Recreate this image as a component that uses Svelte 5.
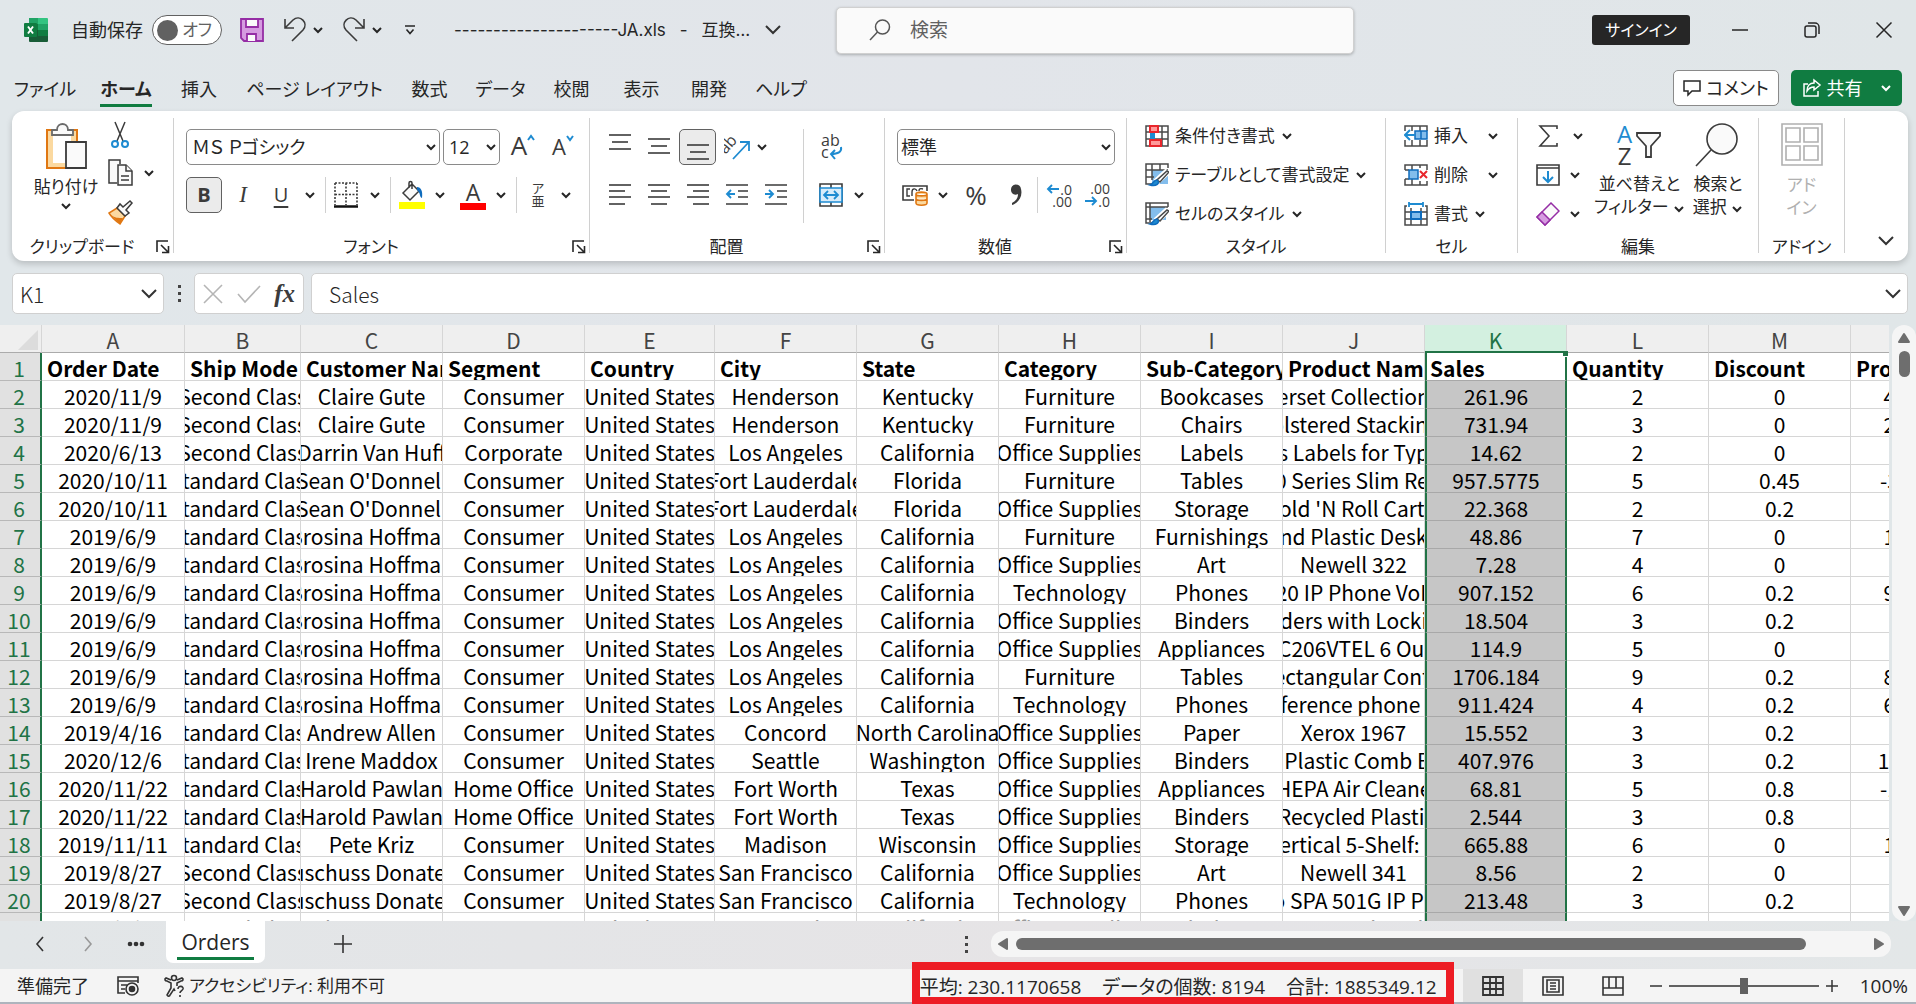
<script>
  let fontName = 'ＭＳ Ｐゴシック'
  let fontSize = '12'
  let numberFormat = '標準'
  let autoSave = false
  let zoom = 50

  const tabs = ['ファイル', 'ホーム', '挿入', 'ページ レイアウト', '数式', 'データ', '校閲', '表示', '開発', 'ヘルプ']
  const letters = 'ABCDEFGHIJKLMN'.split('')
  const widths = [143, 116, 142, 142, 130, 142, 142, 142, 142, 142, 142, 142, 142, 142]
  const headers = ['Order Date', 'Ship Mode', 'Customer Name', 'Segment', 'Country', 'City', 'State', 'Category', 'Sub-Category', 'Product Name', 'Sales', 'Quantity', 'Discount', 'Profit']

  const US = 'United States'
  const OS = 'Office Supplies'
  const LA = 'Los Angeles'
  const CA = 'California'
  const BH = 'Brosina Hoffman'
  const rows = [
    ['2020/11/9', 'Second Class', 'Claire Gute', 'Consumer', US, 'Henderson', 'Kentucky', 'Furniture', 'Bookcases', 'Bush Somerset Collection Bookcase', '261.96', '2', '0', '41.9136'],
    ['2020/11/9', 'Second Class', 'Claire Gute', 'Consumer', US, 'Henderson', 'Kentucky', 'Furniture', 'Chairs', 'Hon Deluxe Fabric Upholstered Stacking Chairs, Rounded Back', '731.94', '3', '0', '219.582'],
    ['2020/6/13', 'Second Class', 'Darrin Van Huff', 'Corporate', US, LA, CA, OS, 'Labels', 'Self-Adhesive Address Labels for Typewriters by Universal', '14.62', '2', '0', '6.8714'],
    ['2020/10/11', 'Standard Class', "Sean O'Donnell", 'Consumer', US, 'Fort Lauderdale', 'Florida', 'Furniture', 'Tables', 'Bretford CR4500 Series Slim Rectangular Table', '957.5775', '5', '0.45', '-383.031'],
    ['2020/10/11', 'Standard Class', "Sean O'Donnell", 'Consumer', US, 'Fort Lauderdale', 'Florida', OS, 'Storage', "Eldon Fold 'N Roll Cart System", '22.368', '2', '0.2', '2.5164'],
    ['2019/6/9', 'Standard Class', BH, 'Consumer', US, LA, CA, 'Furniture', 'Furnishings', 'Eldon Expressions Wood and Plastic Desk Accessories, Cherry Wood', '48.86', '7', '0', '14.1694'],
    ['2019/6/9', 'Standard Class', BH, 'Consumer', US, LA, CA, OS, 'Art', 'Newell 322', '7.28', '4', '0', '1.9656'],
    ['2019/6/9', 'Standard Class', BH, 'Consumer', US, LA, CA, 'Technology', 'Phones', 'Mitel 5320 IP Phone VoIP phone', '907.152', '6', '0.2', '90.7152'],
    ['2019/6/9', 'Standard Class', BH, 'Consumer', US, LA, CA, OS, 'Binders', 'DXL Angle-View Binders with Locking Rings by Samsill', '18.504', '3', '0.2', '5.7825'],
    ['2019/6/9', 'Standard Class', BH, 'Consumer', US, LA, CA, OS, 'Appliances', 'Belkin F5C206VTEL 6 Outlet Surge', '114.9', '5', '0', '34.47'],
    ['2019/6/9', 'Standard Class', BH, 'Consumer', US, LA, CA, 'Furniture', 'Tables', 'Chromcraft Rectangular Conference Tables', '1706.184', '9', '0.2', '85.3092'],
    ['2019/6/9', 'Standard Class', BH, 'Consumer', US, LA, CA, 'Technology', 'Phones', 'Konftel 250 Conference phone - Charcoal black', '911.424', '4', '0.2', '68.3568'],
    ['2019/4/16', 'Standard Class', 'Andrew Allen', 'Consumer', US, 'Concord', 'North Carolina', OS, 'Paper', 'Xerox 1967', '15.552', '3', '0.2', '5.4432'],
    ['2020/12/6', 'Standard Class', 'Irene Maddox', 'Consumer', US, 'Seattle', 'Washington', OS, 'Binders', 'Fellowes PB200 Plastic Comb Binding Machine', '407.976', '3', '0.2', '132.5922'],
    ['2020/11/22', 'Standard Class', 'Harold Pawlan', 'Home Office', US, 'Fort Worth', 'Texas', OS, 'Appliances', 'Holmes Replacement Filter for HEPA Air Cleaner, Very Large Room, HEPA Filter', '68.81', '5', '0.8', '-123.858'],
    ['2020/11/22', 'Standard Class', 'Harold Pawlan', 'Home Office', US, 'Fort Worth', 'Texas', OS, 'Binders', 'Storex DuraTech Recycled Plastic Frosted Binders', '2.544', '3', '0.8', '-3.816'],
    ['2019/11/11', 'Standard Class', 'Pete Kriz', 'Consumer', US, 'Madison', 'Wisconsin', OS, 'Storage', 'Stur-D-Stor Shelving, Vertical 5-Shelf: 72"H x 36"W x 18 1/2"D', '665.88', '6', '0', '13.3176'],
    ['2019/8/27', 'Second Class', 'Zuschuss Donatelli', 'Consumer', US, 'San Francisco', CA, OS, 'Art', 'Newell 341', '8.56', '2', '0', '2.4824'],
    ['2019/8/27', 'Second Class', 'Zuschuss Donatelli', 'Consumer', US, 'San Francisco', CA, 'Technology', 'Phones', 'Cisco SPA 501G IP Phone', '213.48', '3', '0.2', '16.011'],
    ['2019/8/27', 'Second Class', 'Zuschuss Donatelli', 'Consumer', US, 'San Francisco', CA, OS, 'Binders', 'Wilson Jones Hanging View Binder', '22.72', '4', '0.2', '7.384']
  ]
</script>

{#snippet chev()}
  <svg class="chev" width="12" height="8" viewBox="0 0 12 8"><path d="M2 2l4 4 4-4" /></svg>
{/snippet}

{#snippet bigChev()}
  <svg class="chev big" width="18" height="12" viewBox="0 0 18 12"><path d="M2 2l7 7 7-7" /></svg>
{/snippet}

{#snippet launcher(name)}
  <button class="launcher" aria-label={name}>
    <svg width="14" height="14" viewBox="0 0 14 14" fill="none" stroke="#262626" stroke-width="1.6"><path d="M1 12V1h11M5 5l7 7M12.5 6v6.5H6" /></svg>
  </button>
{/snippet}

{#snippet lines(list)}
  <svg width="26" height="26" viewBox="0 0 26 26" stroke="#3b3b3b" stroke-width="1.6">
    {#each list as [x1, x2, y]}
      <path d="M{x1} {y}H{x2}" />
    {/each}
  </svg>
{/snippet}

<div class="app">
  <header class="titlebar">
    <svg class="logo" width="24" height="24" viewBox="0 0 24 24">
      <path fill="#21a366" d="M5 0h10v6H5z" /><path fill="#33c481" d="M14 0h9a1 1 0 011 1v5H14z" />
      <path fill="#185c37" d="M5 12h9v6h10v5a1 1 0 01-1 1H6a1 1 0 01-1-1z" /><path fill="#107c41" d="M5 6h9v6H5zM14 12h10v6H14z" /><path fill="#21a366" d="M14 6h10v6H14z" />
      <rect y="5" width="13" height="14" rx="1" fill="#107c41" />
      <path d="M4 8.500l5 7M9 8.500l-5 7" stroke="#fff" stroke-width="1.900" />
    </svg>
    <label class="autosave">
      <span>自動保存</span>
      <span class="switch">
        <input type="checkbox" role="switch" bind:checked={autoSave} />
        <span class="knob"></span>
        <span class="off">オフ</span>
      </span>
    </label>
    <div class="quick">
      <button aria-label="上書き保存">
        <svg width="26" height="26" viewBox="0 0 26 26" fill="#d59be0" stroke="#952da5" stroke-width="1.800"><path d="M2 2h22v22H5l-3-3z" /><path fill="#fafafa" d="M7 2h12v8H7zM8 24v-7h9v7" /></svg>
      </button>
      <button aria-label="元に戻す">
        <svg width="26" height="28" viewBox="0 0 26 28" fill="none" stroke="#3b3b3b" stroke-width="1.600"><path d="M3 3v9h9M3 12l8-8c7-6 16 3 10 10L10 25" /></svg>
        {@render chev()}
      </button>
      <button aria-label="やり直し">
        <svg width="26" height="28" viewBox="0 0 26 28" fill="none" stroke="#3b3b3b" stroke-width="1.600"><path d="M23 3v9h-9M23 12l-8-8C8-2-1 7 5 14l11 11" /></svg>
        {@render chev()}
      </button>
      <button aria-label="クイック アクセスのカスタマイズ">
        <svg width="12" height="12" viewBox="0 0 12 12" fill="none" stroke="#262626" stroke-width="1.600"><path d="M1 2h10M2.500 5.500L6 9.500l3.500-4" /></svg>
      </button>
    </div>
    <button class="filename"><span>---------------------JA.xls</span><span>-</span><span>互換…</span>{@render bigChev()}</button>
    <label class="search">
      <svg width="24" height="24" viewBox="0 0 24 24" fill="none" stroke="#555" stroke-width="1.500"><circle cx="14.500" cy="9" r="7" /><path d="M9.500 14L2 22" /></svg>
      <input type="search" placeholder="検索" aria-label="検索" />
    </label>
    <div class="window">
      <button class="signin">サインイン</button>
      <button aria-label="最小化"><svg width="18" height="18" viewBox="0 0 18 18" stroke="#262626" stroke-width="1.500"><path d="M1 9h16" /></svg></button>
      <button aria-label="元に戻す (縮小)"><svg width="18" height="18" viewBox="0 0 18 18" fill="none" stroke="#262626" stroke-width="1.500"><rect x="2" y="5" width="11" height="11" rx="2" /><path d="M5 2h7a4 4 0 014 4v7" /></svg></button>
      <button aria-label="閉じる"><svg width="18" height="18" viewBox="0 0 18 18" stroke="#262626" stroke-width="1.500"><path d="M1.500 1.500l15 15M16.500 1.500l-15 15" /></svg></button>
    </div>
  </header>

  <div class="tabbar">
    <nav>
      {#each tabs as tab}
        <button class:active={tab === 'ホーム'}><span>{tab}</span></button>
      {/each}
    </nav>
    <button class="comment">
      <svg width="18" height="18" viewBox="0 0 18 18" fill="none" stroke="#262626" stroke-width="1.500"><path d="M1 2h16v10H9l-4 4v-4H1z" /></svg>コメント
    </button>
    <button class="share">
      <svg width="20" height="20" viewBox="0 0 20 20" fill="none" stroke="#fff" stroke-width="1.500"><path d="M6 6H2v12h14v-5" /><path d="M12 2l6 5-6 5V9c-3 0-5 1-7 4 0-5 3-8 7-8z" /></svg>共有{@render chev()}
    </button>
  </div>

  <section class="ribbon">
    <div class="group">
      <div class="clip">
        <button class="tall">
          <svg width="42" height="46" viewBox="0 0 42 46" stroke-width="1.800">
            <path fill="#fff" stroke="#e07712" d="M2 7h30v38H2z" stroke-width="2" />
            <path fill="#fbd9a0" d="M3 8h5v32h12v4H3zM26 8h5v11h-5z" />
            <path fill="#fafafa" stroke="#6b6b6b" d="M7 12V7h5c0-8 11-8 11 0h5v5z" />
            <path fill="#fafafa" stroke="#3b3b3b" d="M21 19h20v26H21z" />
          </svg>
          <span>貼り付け</span>
          {@render chev()}
        </button>
        <div class="col">
          <button class="cut" aria-label="切り取り"><svg width="24" height="28" viewBox="0 0 24 28" fill="none" stroke="#3b3b3b" stroke-width="1.500"><path d="M7 1l8 19M17 1L9 20" /><g stroke="#1e8bd1" stroke-width="2"><circle cx="7" cy="23" r="3" /><circle cx="17" cy="23" r="3" /></g></svg></button>
          <button aria-label="コピー"><svg width="26" height="28" viewBox="0 0 26 28" fill="#fafafa" stroke="#3b3b3b" stroke-width="1.500"><path d="M9 24H1V1h11v4" /><path d="M10 6h8l6 6v14H10z" /><path d="M18 6v6h6M13 17h8M13 21h8" /></svg>{@render chev()}</button>
          <button aria-label="書式のコピー"><svg width="26" height="26" viewBox="0 0 26 26" stroke-width="1.500"><path fill="#fbd9a0" stroke="#e07712" d="M9 9l8 8-5 8C8 22 4 19 1 14z" /><path fill="#e07712" d="M3 16c4 3 7 3 12 3l-3 6z" /><path fill="#fafafa" stroke="#3b3b3b" d="M9 9l3-4 3 3 7-6 2 2-6 7 3 3-4 3z" /></svg></button>
        </div>
      </div>
      <div class="caption"><span>クリップボード</span>{@render launcher('クリップボードの設定')}</div>
    </div>

    <div class="group">
      <div class="row">
        <span class="select wide"><select aria-label="フォント" bind:value={fontName}><option>ＭＳ Ｐゴシック</option></select>{@render chev()}</span>
        <span class="select narrow"><select aria-label="フォント サイズ" bind:value={fontSize}><option>12</option></select>{@render chev()}</span>
        <button class="grow" aria-label="フォント サイズの拡大"><span>A</span><svg width="8" height="22" viewBox="0 0 8 22" fill="none" stroke="#1e8bd1" stroke-width="2"><path d="M1 11l3-4 3 4" /></svg></button>
        <button class="grow small" aria-label="フォント サイズの縮小"><span>A</span><svg width="8" height="22" viewBox="0 0 8 22" fill="none" stroke="#1e8bd1" stroke-width="2"><path d="M1 7l3 4 3-4" /></svg></button>
      </div>
      <div class="row font-tools">
        <button class="on bold">B</button>
        <button class="italic">I</button>
        <button class="under">U</button>
        <button aria-label="下線の種類">{@render chev()}</button>
        <i class="sep"></i>
        <button aria-label="罫線"><svg width="24" height="26" viewBox="0 0 24 26" fill="none" stroke="#3b3b3b" stroke-width="1.600"><path stroke-dasharray="2 1.500" d="M1 1h22M1 12.500h22M1 1v22M12 1v22M23 1v22" /><path stroke="#111" stroke-width="2.500" d="M0 24.500h24" /></svg></button>
        <button aria-label="罫線の種類">{@render chev()}</button>
        <i class="sep"></i>
        <button aria-label="塗りつぶしの色"><svg width="26" height="30" viewBox="0 0 26 30"><path fill="#fafafa" stroke="#3b3b3b" stroke-width="1.500" d="M4 13l9-9 7 7-9 9zM10 8V3c0-2 3-2 3 0v6" /><path fill="#0f6cbd" d="M18 7c4 0 6 4 5 11-3-1-1-5-5-8z" /><path fill="#ff0" d="M0 22h26v7H0z" /></svg></button>
        <button aria-label="塗りつぶしの色を選択">{@render chev()}</button>
        <button class="color">A<svg width="26" height="7" viewBox="0 0 26 7"><path fill="#f00" d="M0 0h26v7H0z" /></svg></button>
        <button aria-label="フォントの色を選択">{@render chev()}</button>
        <i class="sep"></i>
        <button class="ruby"><span>ア</span><span>亜</span></button>
        <button aria-label="ふりがなの設定">{@render chev()}</button>
      </div>
      <div class="caption"><span>フォント</span>{@render launcher('フォントの設定')}</div>
    </div>

    <div class="group">
      <div class="align">
        <div class="align-grid">
          <button aria-label="上揃え">{@render lines([[2, 24, 1], [5, 21, 8], [2, 24, 15]])}</button>
          <button aria-label="上下中央揃え">{@render lines([[2, 24, 5], [5, 21, 12], [2, 24, 19]])}</button>
          <button class="on" aria-label="下揃え">{@render lines([[2, 24, 11], [5, 21, 18], [2, 24, 25]])}</button>
          <button aria-label="方向"><svg width="26" height="26" viewBox="0 0 26 26"><text x="-3" y="13" transform="rotate(-48 8 12)" font-size="16" fill="#3b3b3b">ab</text><path d="M9 25L24 9M16 8h9v9" fill="none" stroke="#1e8bd1" stroke-width="1.800" /></svg></button>
          <button class="left" aria-label="方向の種類">{@render chev()}</button>
          <button aria-label="左揃え">{@render lines([[2, 24, 3], [2, 18, 9], [2, 24, 15], [2, 18, 22]])}</button>
          <button aria-label="中央揃え">{@render lines([[2, 24, 3], [5, 21, 9], [2, 24, 15], [5, 21, 22]])}</button>
          <button aria-label="右揃え">{@render lines([[2, 24, 3], [8, 24, 9], [2, 24, 15], [8, 24, 22]])}</button>
          <button aria-label="インデントを減らす"><svg width="26" height="26" viewBox="0 0 26 26" fill="none" stroke="#3b3b3b" stroke-width="1.600"><path d="M2 3h22M14 9h10M14 15h10M2 22h22" /><path stroke="#1e8bd1" stroke-width="1.900" d="M11 12H3M7 8l-4 4 4 4" /></svg></button>
          <button aria-label="インデントを増やす"><svg width="26" height="26" viewBox="0 0 26 26" fill="none" stroke="#3b3b3b" stroke-width="1.600"><path d="M2 3h22M14 9h10M14 15h10M2 22h22" /><path stroke="#1e8bd1" stroke-width="1.900" d="M2 12h8M6 8l4 4-4 4" /></svg></button>
        </div>
        <i class="sep"></i>
        <div class="align-side">
          <button class="wrap"><span>ab</span><span>c<svg width="14" height="14" viewBox="0 0 14 14" fill="none" stroke="#1e8bd1" stroke-width="2"><path d="M12 1c1 5-3 7-10 7M6 4L2 8l4 5" /></svg></span></button>
          <span></span>
          <button aria-label="セルを結合して中央揃え"><svg width="26" height="26" viewBox="0 0 26 26" fill="none" stroke="#3b3b3b" stroke-width="1.600"><path d="M2 2h22v22H2zM13 2v5M13 19v5" /><path fill="#d9ecfa" stroke="#1e8bd1" d="M2 6h22v14H2z" /><path stroke="#1e8bd1" stroke-width="1.800" d="M6 13h14M10 9l-4 4 4 4M16 9l4 4-4 4" /></svg></button>
          <button aria-label="結合の種類">{@render chev()}</button>
        </div>
      </div>
      <div class="caption"><span>配置</span>{@render launcher('配置の設定')}</div>
    </div>

    <div class="group">
      <div class="row">
        <span class="select number"><select aria-label="数値の書式" bind:value={numberFormat}><option>標準</option></select>{@render chev()}</span>
      </div>
      <div class="row number-tools">
        <button aria-label="通貨表示形式"><svg width="26" height="24" viewBox="0 0 26 24" fill="none" stroke="#3b3b3b" stroke-width="1.600"><path d="M12 17H1V3h24v5" /><path d="M8 6H5v7h3M15 8c-1-3-5-3-5 1v4M21 6c-3-1-4 0-4 2" stroke-width="1.400" /><path fill="#fbd9a0" stroke="#e07712" d="M14 11c0-2.500 11-2.500 11 0v9c0 3-11 3-11 0zM14 11c0 2.500 11 2.500 11 0M14 15.500c0 2.500 11 2.500 11 0" /></svg></button>
        <button aria-label="通貨の種類">{@render chev()}</button>
        <button class="percent">%</button>
        <button aria-label="桁区切りスタイル"><svg width="14" height="22" viewBox="0 0 14 22"><path fill="#3b3b3b" d="M2 6a5 5 0 0110-1c2 8-3 14-9 16v-2c4-2 6-5 6-9-4 2-7-1-7-4z" /></svg></button>
        <i class="sep"></i>
        <button class="decimal" aria-label="小数点以下の表示桁数を増やす"><span><svg width="14" height="12" viewBox="0 0 14 12" fill="none" stroke="#1e8bd1" stroke-width="1.900"><path d="M13 6H2M6 2L2 6l4 4" /></svg>.0</span><span>.00</span></button>
        <button class="decimal" aria-label="小数点以下の表示桁数を減らす"><span>.00</span><span><svg width="14" height="12" viewBox="0 0 14 12" fill="none" stroke="#1e8bd1" stroke-width="1.900"><path d="M1 6h11M8 2l4 4-4 4" /></svg>.0</span></button>
      </div>
      <div class="caption"><span>数値</span>{@render launcher('数値の設定')}</div>
    </div>

    <div class="group">
      <div class="list">
        <button><svg width="24" height="22" viewBox="0 0 24 22" fill="none" stroke="#4a4a4a" stroke-width="1.500"><path d="M1 1h22v20H1zM1 7h22M1 14h22M6 1v20M17 1v20" /><path fill="#f99" stroke="#e8262c" stroke-width="2" d="M5 1h8v6H5zM5 15h11v6H5z" /><path fill="#1e8bd1" d="M5 8h5v6H5z" stroke="none" /></svg>条件付き書式{@render chev()}</button>
        <button><svg width="24" height="24" viewBox="0 0 24 24" fill="none" stroke="#4a4a4a" stroke-width="1.500"><path fill="#83bdec" stroke="none" d="M7 7h16v14H7z" /><path d="M12 21H1V1h22v4M1 7h22M1 14h8M7 1v16M15 1v6" /><path stroke="#fff" stroke-width="7" d="M23 8L11 19" /><path fill="#fff" d="M22 8l2 1-9 10-3-2z" /><path fill="#1e8bd1" stroke="#0f6cbd" d="M12 17c4 3-1 7-7 5 4-1 3-5 7-5z" /></svg>テーブルとして書式設定{@render chev()}</button>
        <button><svg width="24" height="24" viewBox="0 0 24 24" fill="none" stroke="#4a4a4a" stroke-width="1.500"><path fill="#83bdec" stroke="none" d="M5 5h16v13H5z" /><path d="M12 21H1V1h22v4M1 5h22M5 1v19M1 17h6" /><path stroke="#fff" stroke-width="7" d="M23 8L11 19" /><path fill="#fff" d="M22 8l2 1-9 10-3-2z" /><path fill="#1e8bd1" stroke="#0f6cbd" d="M12 17c4 3-1 7-7 5 4-1 3-5 7-5z" /></svg>セルのスタイル{@render chev()}</button>
      </div>
      <div class="caption"><span>スタイル</span></div>
    </div>

    <div class="group">
      <div class="list">
        <button class="spread"><svg width="24" height="22" viewBox="0 0 24 22" fill="none" stroke="#4a4a4a" stroke-width="1.500"><path d="M1 6V1h22v5M1 15v6h22v-6M8 1v5M16 1v5M8 15v6M16 15v6" /><path fill="#83bdec" stroke="#0f6cbd" d="M11 6h12v8H11zM17 6v8" /><path stroke="#1e8bd1" stroke-width="2" d="M11 10H2M6 5l-5 5 5 5" /></svg><span>挿入</span>{@render chev()}</button>
        <button class="spread"><svg width="24" height="22" viewBox="0 0 24 22" fill="none" stroke="#4a4a4a" stroke-width="1.500"><path d="M1 6V1h22v5M1 15v6h22v-4M8 1v5M16 1v3M8 15v6M16 17v4M1 6h4M1 15h4" /><path fill="#83bdec" stroke="#0f6cbd" d="M5 6h9v9H5z" /><path stroke="#e8262c" stroke-width="2" d="M16 7l7 7M23 7l-7 7" /></svg><span>削除</span>{@render chev()}</button>
        <button><svg width="24" height="24" viewBox="0 0 24 24" fill="none" stroke="#4a4a4a" stroke-width="1.500"><path d="M3 4H1v19h22V4h-2M1 10h22M1 17h22M7 6v17M17 6v17" /><path fill="#83bdec" stroke="#0f6cbd" stroke-width="2" d="M7 10h10v7H7z" /><path stroke="#1e8bd1" stroke-width="1.800" d="M5 2h14M5 0v5M19 0v5" /></svg><span>書式</span>{@render chev()}</button>
      </div>
      <div class="caption"><span>セル</span></div>
    </div>

    <div class="group">
      <div class="edit">
        <div class="col">
          <button class="sum" aria-label="オート SUM"><svg width="24" height="24" viewBox="0 0 24 24" fill="none" stroke="#3b3b3b" stroke-width="1.600"><path d="M21 5V2H4l9 10-9 10h17v-3" /></svg>{@render chev()}</button>
          <button aria-label="フィル"><svg width="24" height="22" viewBox="0 0 24 22" fill="none" stroke="#3b3b3b" stroke-width="1.600"><path d="M1 1h22v20H1zM1 4h22" /><path stroke="#1e8bd1" stroke-width="2" d="M12 7v11M7 13l5 5 5-5" /></svg>{@render chev()}</button>
          <button aria-label="クリア"><svg width="24" height="24" viewBox="0 0 24 24" fill="#fafafa" stroke="#952da5" stroke-width="1.500"><path d="M15 1l8 8L9 23l-8-8z" /><path fill="#d59be0" d="M6 10l8 8-5 5-8-8z" /></svg>{@render chev()}</button>
        </div>
        <button class="tall">
          <span class="az"><span><b>A</b>Z</span><svg width="26" height="26" viewBox="0 0 26 26" fill="#fafafa" stroke="#3b3b3b" stroke-width="1.800"><path d="M1 1h23v3l-9 10v11h-5V14L1 4z" /></svg></span>
          <span>並べ替えと<br />フィルター {@render chev()}</span>
        </button>
        <button class="tall">
          <svg width="46" height="46" viewBox="0 0 46 46" fill="#fafafa" stroke="#3b3b3b" stroke-width="1.600"><circle cx="27" cy="17" r="15" /><path d="M16 28L1 44" /></svg>
          <span>検索と<br />選択 {@render chev()}</span>
        </button>
      </div>
      <div class="caption"><span>編集</span></div>
    </div>

    <div class="group">
      <button class="tall addin" disabled>
        <svg width="42" height="46" viewBox="0 0 42 46" fill="none" stroke="#b0b0b0" stroke-width="1.600"><path d="M1 3h40v41H1zM5 7h14v14H5zM23 7h14v14H23zM5 25h14v14H5zM23 25h14v14H23z" /></svg>
        <span>アド<br />イン</span>
      </button>
      <div class="caption"><span>アドイン</span></div>
    </div>

    <div class="collapse"><button aria-label="リボンを折りたたむ">{@render bigChev()}</button></div>
  </section>

  <section class="formulabar">
    <span class="namebox"><input value="K1" aria-label="名前ボックス" />{@render bigChev()}</span>
    <span class="grip"><i></i><i></i><i></i></span>
    <span class="fx">
      <button aria-label="キャンセル"><svg width="20" height="20" viewBox="0 0 20 20" stroke="#b5b5b5" stroke-width="1.600"><path d="M1 1l18 18M19 1L1 19" /></svg></button>
      <button aria-label="入力"><svg width="24" height="20" viewBox="0 0 24 20" fill="none" stroke="#b5b5b5" stroke-width="1.600"><path d="M1 10l7 8L23 2" /></svg></button>
      <button class="fn">fx</button>
    </span>
    <span class="formula"><input value="Sales" aria-label="数式バー" />{@render bigChev()}</span>
  </section>

  <main class="sheet">
    <div class="gridwrap">
      <table>
        <colgroup>
          <col style="width: 42px" />
          {#each widths as w}<col style="width: {w}px" />{/each}
        </colgroup>
        <thead>
          <tr>
            <th class="corner"><svg width="20" height="20" viewBox="0 0 20 20"><path fill="#dcdcdc" d="M20 0v20H0z" /></svg></th>
            {#each letters as l}<th class:sel={l === 'K'}>{l}</th>{/each}
          </tr>
        </thead>
        <tbody>
          <tr class="names">
            <th>1</th>
            {#each headers as h, c}<td class:sel={c === 10}><div>{h}</div>{#if c === 10}<i class="handle"></i>{/if}</td>{/each}
          </tr>
          {#each rows as row, r}
            <tr class:faded={r === 19}>
              <th>{r + 2}</th>
              {#each row as cell, c}<td class:sel={c === 10}><div>{cell}</div></td>{/each}
            </tr>
          {/each}
        </tbody>
      </table>
    </div>
    <div class="vscroll">
      <svg width="14" height="12" viewBox="0 0 14 12"><path fill="#6e6e6e" stroke="#6e6e6e" stroke-width="2" stroke-linejoin="round" d="M7 2l5 8H2z" /></svg>
      <div class="thumb"></div>
      <svg width="14" height="12" viewBox="0 0 14 12"><path fill="#6e6e6e" stroke="#6e6e6e" stroke-width="2" stroke-linejoin="round" d="M2 2h10l-5 8z" /></svg>
    </div>
  </main>

  <div class="sheetbar">
    <button aria-label="前のシート"><svg width="10" height="16" viewBox="0 0 10 16" fill="none" stroke="#333" stroke-width="1.600"><path d="M8 1L2 8l6 7" /></svg></button>
    <button aria-label="次のシート"><svg width="10" height="16" viewBox="0 0 10 16" fill="none" stroke="#999" stroke-width="1.600"><path d="M2 1l6 7-6 7" /></svg></button>
    <button aria-label="その他のシート"><svg width="18" height="6" viewBox="0 0 18 6" fill="#333"><circle cx="3" cy="3" r="2.300" /><circle cx="9" cy="3" r="2.300" /><circle cx="15" cy="3" r="2.300" /></svg></button>
    <button class="sheettab"><span>Orders</span></button>
    <button class="add" aria-label="新しいシート"><svg width="18" height="18" viewBox="0 0 18 18" stroke="#333" stroke-width="1.600"><path d="M9 0v18M0 9h18" /></svg></button>
    <span class="grip"><i></i><i></i><i></i></span>
    <div class="hscroll">
      <svg width="12" height="14" viewBox="0 0 12 14"><path fill="#6e6e6e" stroke="#6e6e6e" stroke-width="2" stroke-linejoin="round" d="M2 7l8-5v10z" /></svg>
      <div class="thumb"></div>
      <svg width="12" height="14" viewBox="0 0 12 14"><path fill="#6e6e6e" stroke="#6e6e6e" stroke-width="2" stroke-linejoin="round" d="M10 7L2 2v10z" /></svg>
    </div>
  </div>

  <footer>
    <span>準備完了</span>
    <button aria-label="マクロの記録"><svg width="24" height="22" viewBox="0 0 24 22" fill="none" stroke="#333" stroke-width="1.600"><path d="M9 18H2V2h20v6M2 6h20M5 10h6M5 14h4" /><circle cx="16" cy="14" r="6" /><circle cx="16" cy="14" r="2.500" fill="#333" /></svg></button>
    <button class="access"><svg width="24" height="24" viewBox="0 0 24 24" fill="none" stroke="#333" stroke-width="1.600"><circle cx="11" cy="4" r="2.500" /><path d="M8 6L3 4C1 5 2 7 4 7l4 2v5l-4 7c1 2 3 1 3 0l4-6 1 2M14 6l5-2c2 1 1 3-1 3l-4 2v3M15 15c0-4 6-3 5 0-1 2-3 2-3 4M17 21v2" /></svg>アクセシビリティ: 利用不可</button>
    <div class="stats"><span>平均: 230.1170658</span><span>データの個数: 8194</span><span>合計: 1885349.12</span></div>
    <div class="views">
      <button class="current" aria-label="標準"><svg width="22" height="20" viewBox="0 0 22 20" fill="none" stroke="#333" stroke-width="1.800"><path d="M1 1h20v18H1zM1 7h20M1 13h20M8 1v18M14 1v18" /></svg></button>
      <button aria-label="ページ レイアウト"><svg width="22" height="20" viewBox="0 0 22 20" fill="none" stroke="#333" stroke-width="1.600"><path d="M1 1h20v18H1zM5 4h12v12H5zM8 7h6M8 10h6M8 13h6" /></svg></button>
      <button aria-label="改ページ プレビュー"><svg width="22" height="20" viewBox="0 0 22 20" fill="none" stroke="#333" stroke-width="1.600"><path d="M1 1h20v18H1zM7 1v11M14 1v11M1 12h20" /></svg></button>
    </div>
    <div class="zoom">
      <button aria-label="縮小"><svg width="12" height="12" viewBox="0 0 12 12" stroke="#333" stroke-width="1.500"><path d="M0 6h12" /></svg></button>
      <input type="range" aria-label="ズーム" bind:value={zoom} />
      <button aria-label="拡大"><svg width="12" height="12" viewBox="0 0 12 12" stroke="#333" stroke-width="1.500"><path d="M0 6h12M6 0v12" /></svg></button>
      <span>100%</span>
    </div>
  </footer>
</div>

<style>
  :global(body) {
    margin: 0;
  }

  .app {
    display: flex;
    flex-direction: column;
    height: 100vh;
    overflow: hidden;
    background: linear-gradient(90deg, #e1e7ea, #e2e5ea 50%, #e0e6e8);
    color: #262626;
    font-family: 'Open Sans', 'Noto Sans CJK JP', sans-serif;
    font-size: 17px;
    line-height: 24px;
    font-feature-settings: 'palt';
  }

  button,
  input,
  select {
    font: inherit;
    font-feature-settings: inherit;
    color: inherit;
    border: 0;
    padding: 0;
    margin: 0;
    background: none;
    outline: none;
  }

  button {
    display: flex;
    align-items: center;
    justify-content: center;
    white-space: nowrap;
  }

  svg {
    flex: none;
  }

  .chev {
    fill: none;
    stroke: #262626;
    stroke-width: 2;
  }

  .chev.big {
    stroke: #333;
    stroke-width: 2;
  }

  /* title bar */
  .titlebar {
    display: flex;
    align-items: center;
    height: 60px;
    padding-left: 24px;
  }

  .autosave {
    display: flex;
    align-items: center;
    gap: 9px;
    margin-left: 23px;
    font-size: 18px;
  }

  .switch {
    display: flex;
    align-items: center;
    box-sizing: border-box;
    width: 70px;
    height: 30px;
    padding: 0 9px 0 4px;
    justify-content: space-between;
    border: 1px solid #616161;
    border-radius: 15px;
    background: #fff;
    font-size: 17px;
    color: #616161;
  }

  .switch input {
    position: absolute;
    opacity: 0;
  }

  .knob {
    width: 21px;
    height: 21px;
    border-radius: 50%;
    background: #616161;
  }

  .quick {
    display: flex;
    align-items: center;
    gap: 17px;
    margin-left: 17px;
  }

  .quick button {
    gap: 4px;
  }

  .quick button:last-child {
    margin-left: 4px;
  }

  .filename {
    gap: 6px;
    margin-left: 38px;
    width: 328px;
    justify-content: space-between;
    font-family: Inter, 'Noto Sans CJK JP', sans-serif;
    font-size: 17px;
  }

  .search {
    display: flex;
    align-items: center;
    box-sizing: border-box;
    width: 518px;
    height: 47px;
    margin-left: 54px;
    padding-left: 31px;
    gap: 18px;
    border: 1px solid #d0d0d0;
    border-radius: 5px;
    background: #fafafa;
    box-shadow: 0 1px 3px rgba(0, 0, 0, 0.25);
    font-size: 19px;
  }

  .search input::placeholder {
    color: #616161;
    opacity: 1;
  }

  .window {
    display: flex;
    align-items: center;
    margin-left: auto;
  }

  .window button {
    width: 72px;
    height: 30px;
  }

  .window button:last-child {
    box-sizing: border-box;
    width: 68px;
    padding-left: 4px;
  }

  .window .signin {
    width: 98px;
    margin-right: 14px;
    border-radius: 3px;
    background: #262626;
    color: #fff;
    font-size: 16px;
  }

  /* tabs */
  .tabbar {
    display: flex;
    align-items: flex-start;
    height: 51px;
    padding-right: 14px;
  }

  nav {
    display: grid;
    grid-template-columns: 90px 72px 74px 157px 73px 69px 73px 67px 68px 76px;
    margin-right: auto;
    font-size: 18px;
  }

  nav button {
    height: 47px;
    align-items: flex-end;
  }

  nav span {
    padding: 4px 0 3px;
    border-bottom: 3px solid transparent;
  }

  nav .active {
    font-weight: 700;
  }

  nav .active span {
    border-color: #107c41;
  }

  .comment,
  .share {
    box-sizing: border-box;
    height: 36px;
    margin-top: 10px;
    border-radius: 5px;
    font-size: 18px;
    gap: 5px;
  }

  .comment {
    width: 106px;
    border: 1px solid #8a8a8a;
    background: #fff;
  }

  .share {
    width: 111px;
    margin-left: 12px;
    background: #107c41;
    color: #fff;
  }

  .share :global(.chev) {
    margin-left: 12px;
    stroke: #fff;
  }

  /* ribbon */
  .ribbon {
    display: grid;
    grid-template-columns: 162px 416px 295px 242px 259px 132px 241px 86px 1fr;
    height: 150px;
    margin: 0 8px 0 12px;
    border-radius: 12px;
    background: #fff;
    box-shadow: 0 3px 6px rgba(0, 0, 0, 0.18);
    flex: none;
  }

  .group {
    display: flex;
    flex-direction: column;
    margin: 7px 0 8px;
    padding: 11px 0 0 12px;
    border-right: 1px solid #d0d0d0;
  }

  .row {
    display: flex;
    height: 36px;
    margin-bottom: 12px;
  }

  .caption {
    display: flex;
    justify-content: center;
    align-items: center;
    margin: auto 0 -6px -12px;
  }

  .caption span {
    flex: 1;
    text-align: center;
  }

  .launcher {
    width: 21px;
    height: 24px;
  }

  .clip {
    display: flex;
    margin-top: -6px;
    height: 108px;
  }

  .tall {
    flex-direction: column;
    justify-content: flex-start;
    line-height: 23px;
  }

  .tall > span {
    text-align: center;
  }

  .clip .tall {
    width: 84px;
    gap: 4px;
  }

  .clip .tall > span {
    padding-top: 2px;
  }

  .col {
    display: flex;
    flex-direction: column;
  }

  .col button {
    justify-content: flex-start;
    height: 39px;
    gap: 9px;
  }

  .clip .col {
    margin-top: -7px;
  }

  .select {
    position: relative;
    display: flex;
    margin-right: 3px;
  }

  .select select {
    box-sizing: border-box;
    width: 100%;
    height: 36px;
    padding-left: 5px;
    appearance: none;
    border: 1px solid #8a8a8a;
    border-radius: 5px;
    background: #fff;
    font-size: 18px;
  }

  .select :global(.chev) {
    position: absolute;
    right: 3px;
    top: 14px;
    pointer-events: none;
  }

  .wide {
    width: 254px;
  }

  .narrow {
    width: 57px;
  }

  .number {
    width: 218px;
  }

  .number select {
    padding-left: 3px;
  }

  .grow {
    width: 40px;
    align-items: flex-start;
    font-size: 26px;
    line-height: 32px;
    color: #3b3b3b;
  }

  .grow.small {
    font-size: 22px;
    line-height: 34px;
  }

  .on {
    box-sizing: border-box;
    border: 1px solid #616161;
    border-radius: 5px;
    background: #ebebeb;
  }

  .font-tools {
    display: grid;
    grid-template-columns: 36px 42px 34px 24px 6px 36px 22px 8px 36px 20px 46px 10px 20px 24px 32px;
    color: #3b3b3b;
    font-size: 20px;
  }

  .bold {
    font-weight: 700;
  }

  .italic {
    font-family: 'Liberation Serif', serif;
    font-style: italic;
    font-size: 23px;
  }

  .under {
    text-decoration: underline;
    text-underline-offset: 4px;
  }

  .color {
    flex-direction: column;
    font-size: 23px;
    line-height: 22px;
  }

  .ruby {
    flex-direction: column;
    font-size: 13px;
    line-height: 13px;
  }

  .sep {
    width: 1px;
    justify-self: center;
    background: #d0d0d0;
  }

  .align {
    display: flex;
    height: 84px;
    margin-left: -2px;
  }

  .align-grid {
    display: grid;
    grid-template-columns: repeat(5, 39px);
    grid-template-rows: 36px 36px;
    row-gap: 12px;
  }

  .align-grid .on {
    margin: 0 1px;
  }

  .align-grid .left {
    justify-content: flex-start;
  }

  .align .sep {
    height: 94px;
    margin-left: 8px;
  }

  .align-side {
    display: grid;
    grid-template-columns: 40px 16px;
    grid-template-rows: 36px 36px;
    row-gap: 12px;
    padding-left: 7px;
  }

  .wrap {
    flex-direction: column;
    align-items: flex-start;
    padding-left: 10px;
    font-size: 16px;
    line-height: 12px;
    color: #3b3b3b;
  }

  .wrap span {
    display: flex;
  }

  .number-tools {
    display: grid;
    grid-template-columns: 36px 20px 46px 34px 8px 34px 38px;
    color: #3b3b3b;
  }

  .percent {
    font-size: 26px;
  }

  .decimal {
    flex-direction: column;
    align-items: flex-end;
    padding-right: 3px;
    font-size: 14px;
    line-height: 12px;
  }

  .list {
    display: flex;
    flex-direction: column;
    margin: -13px 0 0 6px;
  }

  .list button {
    justify-content: flex-start;
    height: 39px;
    gap: 6px;
  }

  .list .spread {
    width: 95px;
  }

  .list .spread span {
    margin-right: auto;
  }

  .edit {
    display: flex;
    margin-top: -7px;
  }

  .edit .col {
    width: 66px;
    margin: -6px 0 0 6px;
  }

  .edit .sum {
    gap: 12px;
  }

  .edit .tall {
    width: 75px;
    gap: 4px;
  }

  .edit .tall + .tall {
    width: 78px;
    margin-left: 2px;
  }

  .az {
    display: flex;
    align-items: center;
    gap: 4px;
    height: 46px;
  }

  .az span {
    display: flex;
    flex-direction: column;
    font-size: 24px;
    line-height: 22px;
    color: #3b3b3b;
  }

  .az b {
    font-weight: 400;
    color: #1e8bd1;
  }

  .addin {
    margin: -8px 0 0 -12px;
    gap: 6px;
    color: #b0b0b0;
  }

  .collapse {
    display: flex;
    align-items: flex-end;
    justify-content: flex-end;
    padding: 0 13px 14px 0;
  }

  /* formula bar */
  .formulabar {
    display: flex;
    height: 41px;
    margin: 12px 8px 11px 12px;
    flex: none;
  }

  .namebox,
  .fx,
  .formula {
    display: flex;
    align-items: center;
    box-sizing: border-box;
    border: 1px solid #d0d0d0;
    border-radius: 5px;
    background: #fff;
  }

  .namebox {
    width: 152px;
    padding: 0 5px 0 7px;
    font-size: 21px;
  }

  .namebox input {
    width: 0;
    flex: 1;
  }

  .grip {
    display: flex;
    flex-direction: column;
    justify-content: center;
    align-items: center;
    gap: 4px;
    width: 30px;
  }

  .grip i {
    width: 3px;
    height: 3px;
    background: #444;
  }

  .fx {
    width: 110px;
    padding: 0 8px;
    justify-content: space-between;
  }

  .fn {
    font-family: 'Liberation Serif', serif;
    font-style: italic;
    font-weight: 700;
    font-size: 25px;
    color: #3b3b3b;
  }

  .formula {
    flex: 1;
    margin-left: 7px;
    padding: 0 5px 0 17px;
    font-size: 21px;
  }

  .formula input {
    flex: 1;
  }

  .namebox input,
  .formula input {
    font-family: 'Noto Sans CJK JP', sans-serif;
    font-weight: 300;
  }

  /* sheet */
  .sheet {
    display: flex;
    flex: 1;
    min-height: 0;
    gap: 3px;
  }

  .gridwrap {
    flex: 1;
    min-width: 0;
    overflow: hidden;
    background: #fff;
  }

  table {
    width: 1993px;
    table-layout: fixed;
    border-collapse: separate;
    border-spacing: 0;
    font-family: 'Noto Sans CJK JP', sans-serif;
    font-size: 21px;
    line-height: 31px;
    color: #000;
    font-feature-settings: normal;
  }

  th,
  td {
    box-sizing: border-box;
    height: 28px;
    padding: 0;
    border-right: 1px solid #d6d6d6;
    border-bottom: 1px solid #d6d6d6;
    font-weight: 400;
  }

  th {
    padding-top: 4px;
    line-height: 23px;
  }

  thead th {
    background: #efefef;
    border-bottom-color: #ababab;
    color: #444;
  }

  thead .sel {
    background: #d3f0e0;
    border-bottom: 2px solid #217346;
    color: #217346;
    line-height: 22px;
  }

  .corner {
    padding-top: 0;
  }

  .corner svg {
    display: block;
    margin: 3px 3px 0 auto;
  }

  tbody th {
    padding-right: 2px;
    background: #e1e1e1;
    border-right: 2px solid #217346;
    border-bottom-color: #b8b8b8;
    color: #217346;
  }

  td div {
    display: flex;
    justify-content: center;
    white-space: nowrap;
    overflow: hidden;
    height: 27px;
  }

  .names td div {
    justify-content: flex-start;
    padding-left: 5px;
    font-weight: 700;
  }

  td.sel {
    position: relative;
    border-left: 2px solid #217346;
    border-right: 2px solid #217346;
    border-bottom-color: #a8a8a8;
    background: #c6c6c6;
  }

  .names td.sel {
    background: #fff;
  }

  .names td.sel div {
    padding-left: 3px;
  }

  .handle {
    position: absolute;
    top: -2px;
    right: -3px;
    width: 5px;
    height: 5px;
    border-bottom: 1px solid #fff;
    background: #217346;
  }

  .faded td {
    color: #999;
  }

  .vscroll {
    display: flex;
    flex-direction: column;
    align-items: center;
    width: 24px;
    padding: 7px 0 4px;
    box-sizing: border-box;
    border-radius: 12px;
    background: #f5f5f5;
  }

  .vscroll .thumb {
    width: 11px;
    height: 26px;
    margin: 7px 0 auto;
  }

  .thumb {
    border-radius: 6px;
    background: #6e6e6e;
  }

  .sheetbar {
    display: flex;
    align-items: flex-start;
    height: 48px;
    padding: 0 25px 0 16px;
    flex: none;
    background: linear-gradient(90deg, #e2e6e8, #e6e4e6 55%, #e5e4e7 65%, #e3e7e8);
  }

  .sheetbar > button {
    width: 48px;
    height: 46px;
  }

  .sheetbar .sheettab {
    box-sizing: border-box;
    width: 99px;
    height: 42px;
    margin-left: 6px;
    padding-top: 5px;
    border-radius: 0 0 7px 7px;
    background: #fff;
    font-size: 21px;
  }

  .sheettab span {
    padding: 0 4px 3px;
    border-bottom: 3px solid #107c41;
  }

  .sheetbar .add {
    width: 144px;
    margin: 0 auto 0 6px;
  }

  .sheetbar .grip {
    width: 50px;
    height: 46px;
  }

  .hscroll {
    display: flex;
    align-items: center;
    width: 48%;
    box-sizing: border-box;
    height: 26px;
    margin-top: 10px;
    padding: 0 6px;
    border-radius: 12px;
    background: #f5f5f5;
  }

  .hscroll .thumb {
    flex: 0 0 89%;
    height: 12px;
    margin: 0 auto 0 7px;
  }

  /* status bar */
  footer {
    display: flex;
    align-items: center;
    height: 35px;
    box-sizing: border-box;
    padding-left: 17px;
    flex: none;
    background: #f4f4f4;
    border-bottom: 2px solid #aeb4bd;
    font-size: 18px;
  }

  footer > button {
    margin-left: 27px;
  }

  footer .access {
    gap: 2px;
    margin: 0 auto 0 23px;
    font-size: 17px;
  }

  .stats {
    position: relative;
    display: flex;
    align-self: flex-start;
    justify-content: space-between;
    box-sizing: border-box;
    width: 542px;
    height: 42px;
    margin-top: -7px;
    padding: 7px 9px 0 0;
    border: 8px solid #ed1c24;
    border-bottom-width: 7px;
    font-size: 19px;
    line-height: 20px;
  }

  .views {
    display: flex;
    align-self: stretch;
    margin-left: 9px;
  }

  .views button {
    width: 60px;
  }

  .views .current {
    background: #e0e0e0;
  }

  .zoom {
    display: flex;
    align-items: center;
    gap: 7px;
    margin-left: 7px;
    padding-right: 8px;
    font-size: 19px;
  }

  .zoom input {
    width: 150px;
    height: 20px;
    appearance: none;
    background: linear-gradient(#616161, #616161) center / 100% 2px no-repeat;
  }

  .zoom input::-webkit-slider-thumb {
    appearance: none;
    width: 8px;
    height: 16px;
    background: #616161;
  }

  .zoom span {
    margin-left: 15px;
  }
</style>
